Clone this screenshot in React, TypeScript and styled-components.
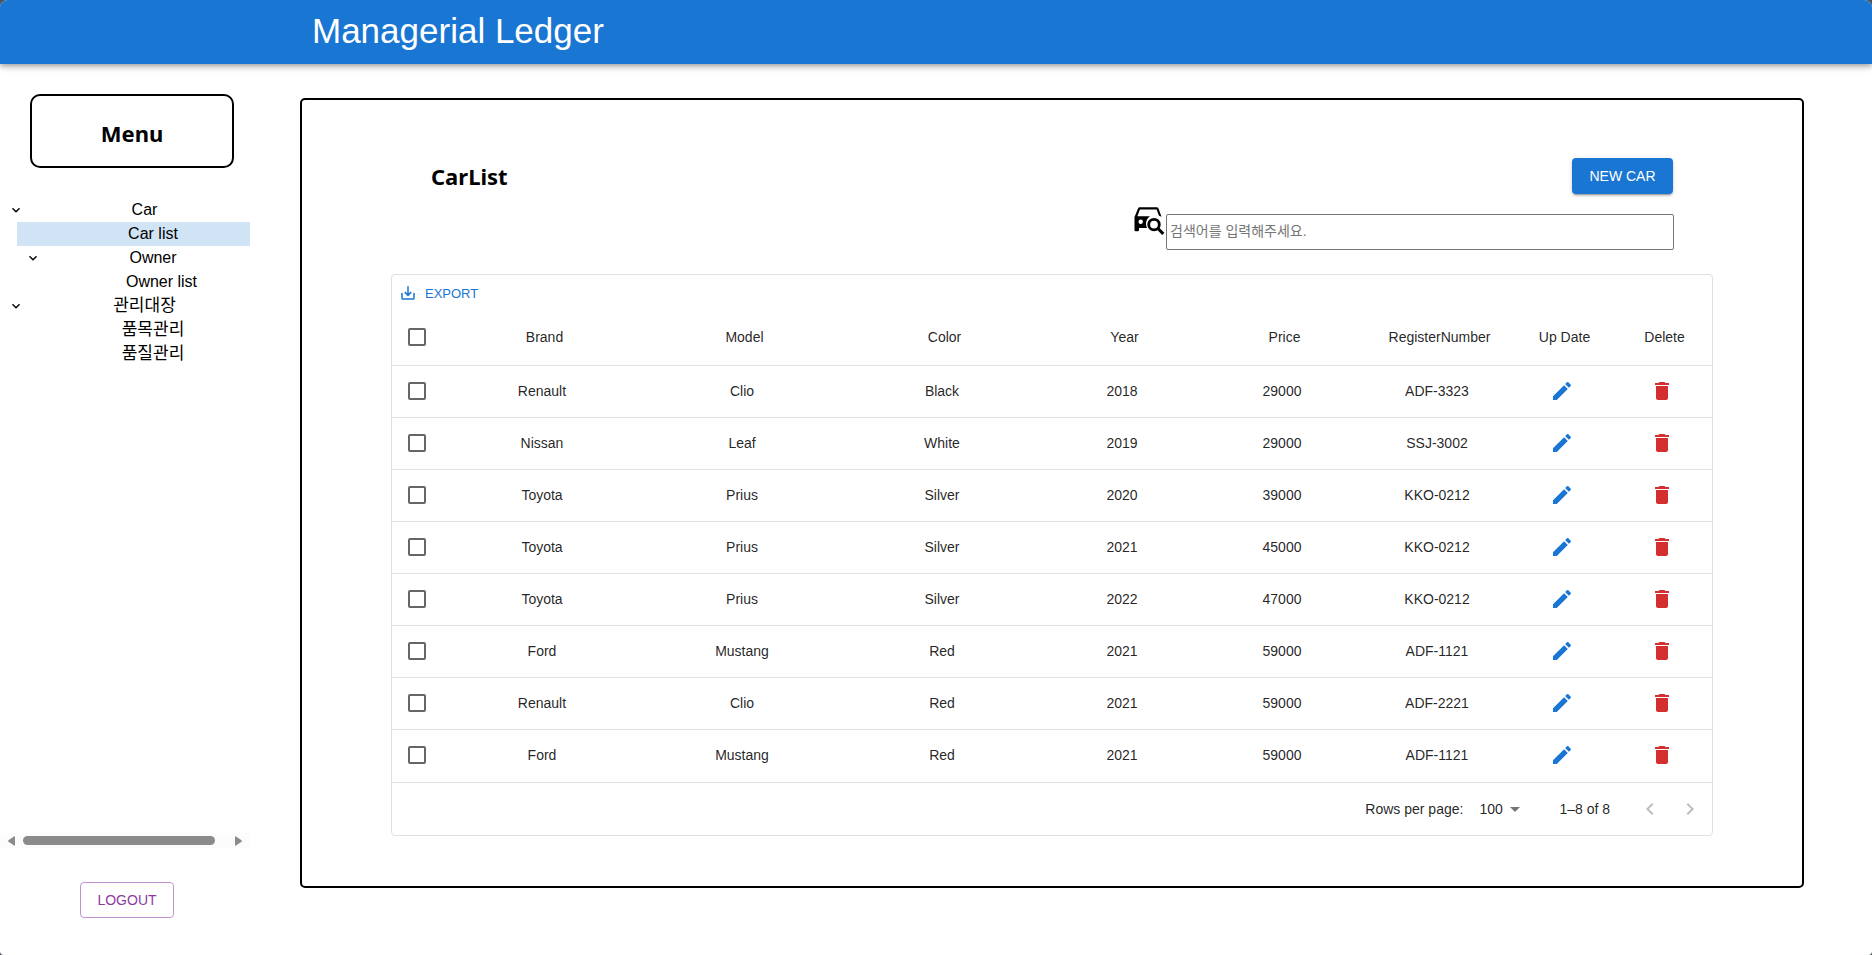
import React from "react";
import styled, { createGlobalStyle } from "styled-components";

const GlobalStyle = createGlobalStyle`
  *, *::before, *::after { box-sizing: border-box; }
  html { background: #4d555c; }
  body { margin: 0; font-family: "Liberation Sans", "Noto Sans CJK KR", sans-serif; color: #000; }
  button, input, select { font-family: inherit; }
`;

const Page = styled.div`
  min-height: 100vh;
  display: flex;
  flex-direction: column;
  background: #fff;
  border-radius: 8px 8px 4px 4px;
  overflow: hidden;
`;

const AppBar = styled.header`
  height: 64px;
  display: flex;
  align-items: center;
  padding: 0 0 2px 312px;
  background: #1976d2;
  color: #fff;
  box-shadow: 0 2px 4px -1px rgba(0, 0, 0, 0.2), 0 4px 5px 0 rgba(0, 0, 0, 0.14), 0 1px 10px 0 rgba(0, 0, 0, 0.12);
`;

const AppTitle = styled.h1`
  margin: 0;
  font-size: 35px;
  line-height: 42px;
  font-weight: 400;
`;

const Body = styled.div`
  flex: 1;
  display: flex;
  align-items: flex-start;
`;

const Sidebar = styled.aside`
  flex: none;
  width: 250px;
  margin-right: 50px;
  padding-top: 30px;
  display: flex;
  flex-direction: column;
`;

const MenuBox = styled.div`
  height: 74px;
  margin: 0 16px 30px 30px;
  padding-top: 4px;
  display: flex;
  align-items: center;
  justify-content: center;
  border: 2px solid #000;
  border-radius: 10px;
`;

const Heading = styled.h2`
  margin: 0;
  font-family: "Noto Sans", "Open Sans", sans-serif;
  font-size: 22px;
  line-height: 32px;
  font-weight: 700;
`;

const TreeViewport = styled.nav`
  height: 635px;
  overflow: hidden;
`;

const Tree = styled.ul`
  width: 266px;
  margin: 0;
  padding: 0;
  list-style: none;
`;

const TreeGroup = styled.ul`
  margin: 0 0 0 17px;
  padding: 0;
  list-style: none;
`;

const TreeRow = styled.a<{ $selected?: boolean }>`
  display: flex;
  align-items: center;
  height: 24px;
  padding: 0 8px;
  color: inherit;
  text-decoration: none;
  background: ${(p) => (p.$selected ? "#d1e4f5" : "transparent")};
`;

const TreeIcon = styled.span`
  flex: none;
  width: 16px;
  margin-right: 7px;
  display: flex;
  justify-content: center;
`;

const TreeLabel = styled.span<{ $korean?: boolean }>`
  flex: 1;
  text-align: center;
  font-size: ${(p) => (p.$korean ? 17 : 16)}px;
  line-height: 24px;
`;

const ScrollTrack = styled.div`
  height: 15px;
  padding: 0 8px;
  display: flex;
  align-items: center;
  background: #fcfcfc;
`;

const ScrollThumb = styled.div`
  width: 192px;
  height: 9px;
  margin: 0 20px 0 8px;
  border-radius: 5px;
  background: #8b8b8b;
`;

const LogoutButton = styled.button`
  width: 94px;
  height: 36px;
  margin: 34px 0 0 80px;
  padding: 0;
  border: 1px solid #c191cd;
  border-radius: 4px;
  background: transparent;
  color: #8c3a9f;
  font-size: 14px;
`;

const Panel = styled.main`
  flex: 1;
  min-width: 0;
  margin: 34px 68px 34px 0;
  padding: 58px 89px 50px;
  border: 2px solid #000;
  border-radius: 5px;
`;

const PanelHead = styled.div`
  display: flex;
  align-items: center;
  justify-content: space-between;
  height: 36px;
  padding: 0 40px;
`;

const NewCarButton = styled.button`
  width: 101px;
  height: 36px;
  padding: 0;
  border: 0;
  border-radius: 4px;
  background: #1976d2;
  color: #fff;
  font-size: 14px;
  box-shadow: 0 3px 1px -2px rgba(0, 0, 0, 0.2), 0 2px 2px 0 rgba(0, 0, 0, 0.14), 0 1px 5px 0 rgba(0, 0, 0, 0.12);
`;

const SearchRow = styled.label`
  display: flex;
  justify-content: flex-end;
  align-items: flex-start;
  margin: 12px 39px 24px 0;
`;

const SearchInput = styled.input`
  width: 508px;
  height: 36px;
  margin-top: 8px;
  padding: 0 3px 2px;
  border: 1px solid #767676;
  border-radius: 2px;
  font-size: 14px;
  &::placeholder { color: #757575; }
`;

const Grid = styled.section`
  border: 1px solid #e0e0e0;
  border-radius: 4px;
  font-size: 14px;
  color: rgba(0, 0, 0, 0.87);
`;

const GridToolbar = styled.div`
  height: 34px;
  padding: 3px 7px 0;
`;

const ExportButton = styled.button`
  display: flex;
  align-items: center;
  gap: 8px;
  height: 30px;
  padding: 0;
  border: 0;
  background: transparent;
  color: #1976d2;
  font-size: 13px;
`;

const Table = styled.table`
  width: 100%;
  table-layout: fixed;
  border-collapse: separate;
  border-spacing: 0;
`;

const Th = styled.th`
  height: 57px;
  padding: 0 0 0 5px;
  border-bottom: 1px solid #e0e0e0;
  font-weight: 400;
  text-align: center;
`;

const Td = styled.td`
  height: 52px;
  padding: 0 0 2px;
  border-bottom: 1px solid #e0e0e0;
  text-align: center;
  tr:last-child > & { border-bottom: 0; }
`;

const CheckTh = styled(Th)`
  padding: 0;
`;

const Checkbox = styled.input`
  appearance: none;
  display: block;
  width: 18px;
  height: 18px;
  margin: 0 auto;
  border: 2px solid #666;
  border-radius: 2px;
  &:checked { background: #1976d2; border-color: #1976d2; }
`;

const IconButton = styled.button<{ $color: string }>`
  display: inline-flex;
  padding: 0;
  border: 0;
  background: transparent;
  vertical-align: middle;
  color: ${(p) => p.$color};
`;

const GridFooter = styled.div`
  display: flex;
  align-items: center;
  justify-content: flex-end;
  height: 53px;
  padding-right: 10px;
  border-top: 1px solid #e0e0e0;
`;

const PageSize = styled.label`
  display: flex;
  align-items: center;
  gap: 16px;
`;

const SelectWrap = styled.span`
  display: flex;
  align-items: center;
`;

const Select = styled.select`
  appearance: none;
  width: 24px;
  height: 24px;
  padding: 0;
  border: 0;
  background: transparent;
  color: inherit;
  font-size: 14px;
`;

const SelectArrow = styled.span`
  display: flex;
  color: #757575;
`;

const RangeText = styled.span`
  margin: 0 28px 0 32px;
`;

const Pager = styled.div`
  display: flex;
  gap: 16px;
`;

const Svg = ({ size, d }: { size: number; d: string }) => (
  <svg width={size} height={size} viewBox="0 0 24 24" fill="currentColor" aria-hidden="true">
    <path d={d} />
  </svg>
);

const PATHS = {
  edit: "M3 17.25V21h3.75L17.81 9.94l-3.75-3.75L3 17.25zM20.71 7.04c.39-.39.39-1.02 0-1.41l-2.34-2.34a.9959.9959 0 0 0-1.41 0l-1.83 1.83 3.75 3.75 1.83-1.83z",
  remove: "M6 19c0 1.1.9 2 2 2h8c1.1 0 2-.9 2-2V7H6v12zM19 4h-3.5l-1-1h-5l-1 1H5v2h14V4z",
  save: "M19 12v7H5v-7H3v7c0 1.1.9 2 2 2h14c1.1 0 2-.9 2-2v-7h-2zm-6 .67 2.59-2.58L17 11.5l-5 5-5-5 1.41-1.41L11 12.67V3h2v9.67z",
  expand: "M16.59 8.59 12 13.17 7.41 8.59 6 10l6 6 6-6z",
  dropDown: "m7 10 5 5 5-5z",
  left: "M15.41 7.41 14 6l-6 6 6 6 1.41-1.41L10.83 12z",
  right: "M10 6 8.59 7.41 13.17 12l-4.58 4.59L10 18l6-6z",
};

const CarSearchIcon = () => (
  <svg width="32" height="32" viewBox="0 0 32 32" aria-hidden="true">
    <path d="M.5 11 4 2.500Q4.500 1.300 5.800 1.300H22.500Q24 1.300 24.500 2.500L27.500 10.800 25 9.800 22.600 3.500H5.900L3.400 10.300H16Q12 13 12 18 12 20.300 13 22H5V24Q5 25.300 3.700 25.300H1.800Q.5 25.300 .5 24Z" />
    <circle cx="6.700" cy="15.700" r="2.200" fill="#fff" />
    <circle cx="20" cy="18.600" r="5.300" fill="none" stroke="#000" strokeWidth="2.800" />
    <path d="m23.700 22.300 5.600 5.600" stroke="#000" strokeWidth="3" />
  </svg>
);

const columns = [
  { name: "Brand", width: 200 },
  { name: "Model", width: 200 },
  { name: "Color", width: 200 },
  { name: "Year", width: 160 },
  { name: "Price", width: 160 },
  { name: "RegisterNumber", width: 150 },
  { name: "Up Date", width: 100 },
  { name: "Delete", width: 100 },
];

const cars = [
  ["Renault", "Clio", "Black", "2018", "29000", "ADF-3323"],
  ["Nissan", "Leaf", "White", "2019", "29000", "SSJ-3002"],
  ["Toyota", "Prius", "Silver", "2020", "39000", "KKO-0212"],
  ["Toyota", "Prius", "Silver", "2021", "45000", "KKO-0212"],
  ["Toyota", "Prius", "Silver", "2022", "47000", "KKO-0212"],
  ["Ford", "Mustang", "Red", "2021", "59000", "ADF-1121"],
  ["Renault", "Clio", "Red", "2021", "59000", "ADF-2221"],
  ["Ford", "Mustang", "Red", "2021", "59000", "ADF-1121"],
];

type ItemProps = {
  label: string;
  expanded?: boolean;
  selected?: boolean;
  korean?: boolean;
  children?: React.ReactNode;
};

const TreeItem = ({ label, expanded, selected, korean, children }: ItemProps) => (
  <li>
    <TreeRow href="#" $selected={selected}>
      <TreeIcon>{expanded && <Svg size={18} d={PATHS.expand} />}</TreeIcon>
      <TreeLabel $korean={korean}>{label}</TreeLabel>
    </TreeRow>
    {children && <TreeGroup>{children}</TreeGroup>}
  </li>
);

const colWidth = (w: number) => `${(w / 1320) * 100}%`;

export default function App() {
  return (
    <>
      <GlobalStyle />
      <Page>
        <AppBar>
          <AppTitle>Managerial Ledger</AppTitle>
        </AppBar>
        <Body>
          <Sidebar>
            <MenuBox>
              <Heading>Menu</Heading>
            </MenuBox>
            <TreeViewport>
              <Tree>
                <TreeItem label="Car" expanded>
                  <TreeItem label="Car list" selected />
                  <TreeItem label="Owner" expanded>
                    <TreeItem label="Owner list" />
                  </TreeItem>
                </TreeItem>
                <TreeItem label="관리대장" expanded korean>
                  <TreeItem label="품목관리" korean />
                  <TreeItem label="품질관리" korean />
                </TreeItem>
              </Tree>
            </TreeViewport>
            <ScrollTrack>
              <svg width="7" height="10" viewBox="0 0 7 10" fill="#8b8b8b">
                <path d="M7 1v8q0 1-1 .5L.5 5.800q-.8-.8 0-1.600L6 .5q1-.5 1 .5Z" />
              </svg>
              <ScrollThumb />
              <svg width="7" height="10" viewBox="0 0 7 10" fill="#8b8b8b">
                <path d="M0 1v8q0 1 1 .5l5.500-3.700q.8-.8 0-1.600L1 .5Q0 0 0 1Z" />
              </svg>
            </ScrollTrack>
            <LogoutButton type="button">LOGOUT</LogoutButton>
          </Sidebar>
          <Panel>
            <PanelHead>
              <Heading>CarList</Heading>
              <NewCarButton type="button">NEW CAR</NewCarButton>
            </PanelHead>
            <SearchRow>
              <CarSearchIcon />
              <SearchInput type="text" aria-label="검색" placeholder="검색어를 입력해주세요." />
            </SearchRow>
            <Grid>
              <GridToolbar>
                <ExportButton type="button">
                  <Svg size={18} d={PATHS.save} />
                  EXPORT
                </ExportButton>
              </GridToolbar>
              <Table>
                <colgroup>
                  <col style={{ width: colWidth(50) }} />
                  {columns.map((c) => (
                    <col key={c.name} style={{ width: colWidth(c.width) }} />
                  ))}
                </colgroup>
                <thead>
                  <tr>
                    <CheckTh>
                      <Checkbox type="checkbox" aria-label="Select all rows" />
                    </CheckTh>
                    {columns.map((c) => (
                      <Th key={c.name}>{c.name}</Th>
                    ))}
                  </tr>
                </thead>
                <tbody>
                  {cars.map((car, i) => (
                    <tr key={i}>
                      <Td>
                        <Checkbox type="checkbox" aria-label={`Select row ${i + 1}`} />
                      </Td>
                      {car.map((value, j) => (
                        <Td key={j}>{value}</Td>
                      ))}
                      <Td>
                        <IconButton type="button" $color="#1976d2" aria-label="Edit">
                          <Svg size={24} d={PATHS.edit} />
                        </IconButton>
                      </Td>
                      <Td>
                        <IconButton type="button" $color="#d32f2f" aria-label="Delete">
                          <Svg size={24} d={PATHS.remove} />
                        </IconButton>
                      </Td>
                    </tr>
                  ))}
                </tbody>
              </Table>
              <GridFooter>
                <PageSize>
                  Rows per page:
                  <SelectWrap>
                    <Select defaultValue="100">
                      <option value="100">100</option>
                    </Select>
                    <SelectArrow>
                      <Svg size={24} d={PATHS.dropDown} />
                    </SelectArrow>
                  </SelectWrap>
                </PageSize>
                <RangeText>1–8 of 8</RangeText>
                <Pager>
                  <IconButton type="button" $color="#bdbdbd" aria-label="Previous page" disabled>
                    <Svg size={24} d={PATHS.left} />
                  </IconButton>
                  <IconButton type="button" $color="#bdbdbd" aria-label="Next page" disabled>
                    <Svg size={24} d={PATHS.right} />
                  </IconButton>
                </Pager>
              </GridFooter>
            </Grid>
          </Panel>
        </Body>
      </Page>
    </>
  );
}
